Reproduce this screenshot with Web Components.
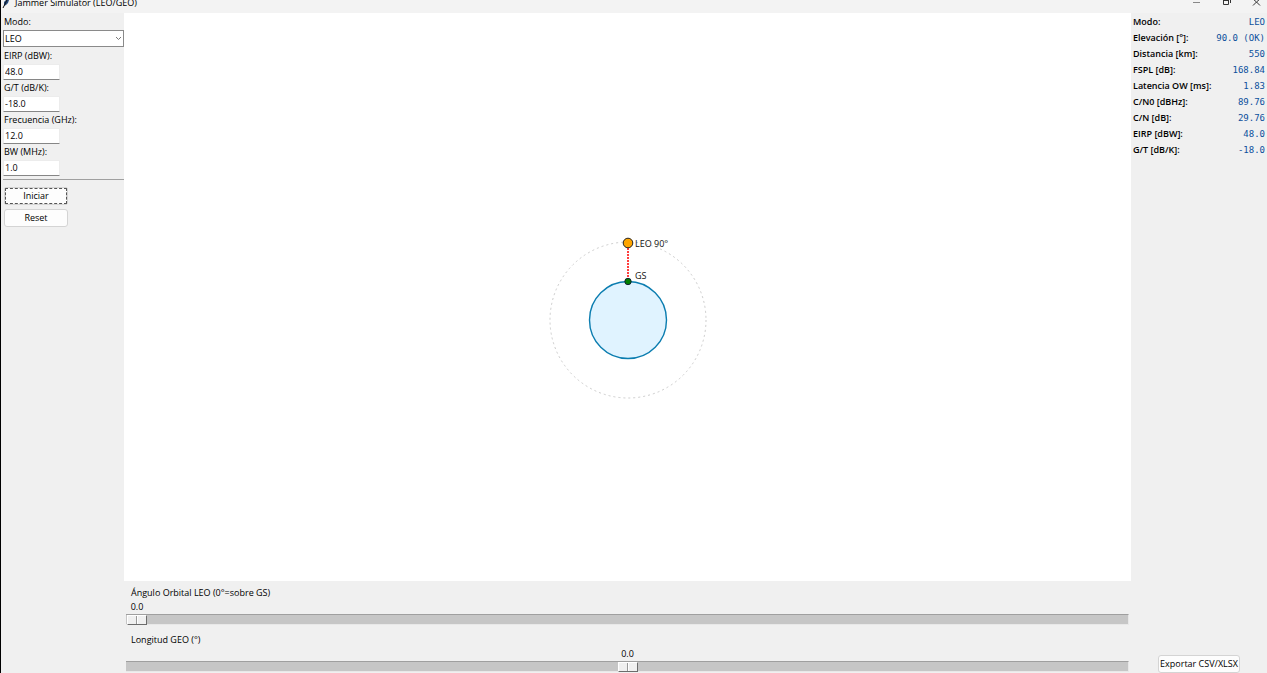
<!DOCTYPE html>
<html lang="es">
<head>
<meta charset="utf-8">
<title>Jammer Simulator (LEO/GEO)</title>
<style>
  body { margin: 0; background: #f0f0f0; color: #000; font: 9px/16px "Open Sans", "Noto Sans", sans-serif; }
</style>
</head>
<body>
<jammer-app></jammer-app>
<script>
const define = (name, html, setup) => {
  const template = document.createElement('template');
  template.innerHTML = html;
  customElements.define(name, class extends HTMLElement {
    constructor() {
      super();
      this.attachShadow({ mode: 'open' }).append(template.content.cloneNode(true));
    }
    connectedCallback() { if (setup) setup(this, this.shadowRoot); }
  });
};

define('title-bar', `
<style>
  :host { display: flex; align-items: flex-start; height: 13px; overflow: hidden; background: #f3f3f3; line-height: 6px; }
  .feather { width: 8px; height: 8px; margin: 0 4px 0 1px; }
  span { flex: 1; white-space: nowrap; padding-left: 1px; }
  button { border: 0; padding: 0; width: 30px; height: 8px; background: none; display: flex; justify-content: flex-end; }
  button:last-child { padding-right: 6px; width: 36px; }
  button svg { width: 9px; height: 8px; fill: none; stroke: #333; }
</style>
<svg class="feather" viewBox="0 0 8 8"><path d="M2 6 2 2 4 0H7L6 3 4 5Z" fill="#254a7c"/><path d="M1 8 3 4 5 0" fill="none" stroke="#111"/></svg>
<span><slot></slot></span>
<button aria-label="Minimizar"><svg viewBox="0 0 9 8"><path d="M1 2.500H8" stroke="#888"/></svg></button>
<button aria-label="Restaurar"><svg viewBox="0 0 9 8"><path d="M1.500 0V4.500H6.500V0M1 0.500H7M8.500 0V3"/></svg></button>
<button aria-label="Cerrar"><svg viewBox="0 0 9 8"><path d="M1 -1 4.500 2 8 -1M1 5.500 4.500 2 8 5.500"/></svg></button>
`);

define('mode-select', `
<style>
  :host { display: block; }
  label { display: block; padding-left: 1px; }
  div { display: grid; align-items: center; padding-bottom: 1px; }
  select, svg { grid-area: 1 / 1; }
  select { appearance: none; box-sizing: border-box; width: 100%; height: 17px; border: 1px solid #8a8a8a; border-radius: 0; background: #fff; color: inherit; font: inherit; line-height: 15px; padding: 0 12px 0 1px; margin: 0; }
  svg { justify-self: end; width: 7px; height: 5px; margin-right: 2px; fill: none; stroke: #777; pointer-events: none; }
</style>
<label for="mode">Modo:</label>
<div><select id="mode"><option>LEO</option><option>GEO</option></select>
<svg viewBox="0 0 7 5"><path d="M1 1 3.500 3.500 6 1"/></svg></div>
`);

define('number-field', `
<style>
  :host { display: block; }
  label { display: block; padding-left: 1px; white-space: nowrap; }
  input { display: block; box-sizing: border-box; width: 57px; height: 16px; border: 1px solid #ececec; border-bottom-color: #868686; border-radius: 1px; background: #fff; color: inherit; font: inherit; padding: 0 1px; }
</style>
<label for="field"><slot></slot></label>
<input id="field" type="text" inputmode="decimal">
`, (host, root) => { root.querySelector('input').value = host.getAttribute('value'); });

define('push-button', `
<style>
  :host { display: block; }
  button { display: block; box-sizing: border-box; width: 100%; height: 18px; border: 1px solid #d4d4d4; border-radius: 3px; background: #fdfdfd; color: inherit; font: inherit; line-height: 16px; padding: 0 1px; white-space: nowrap; }
  :host([selected]) button { outline: 1px dashed #555; outline-offset: -2px; border-radius: 2px; }
</style>
<button type="button"><slot></slot></button>
`);

define('control-panel', `
<style>
  :host { display: block; padding: 1px 0 0 2px; }
  hr { border: 0; border-top: 1px solid #a0a0a0; margin: 3px 0 7px; }
  .buttons { display: grid; gap: 4px; width: 64px; padding-left: 1px; }
</style>
<mode-select></mode-select>
<number-field value="48.0">EIRP (dBW):</number-field>
<number-field value="-18.0">G/T (dB/K):</number-field>
<number-field value="12.0">Frecuencia (GHz):</number-field>
<number-field value="1.0">BW (MHz):</number-field>
<hr>
<div class="buttons"><push-button selected>Iniciar</push-button><push-button>Reset</push-button></div>
`);

define('orbit-view', `
<style>
  :host { display: flex; align-items: center; justify-content: center; box-sizing: border-box; padding-top: 46px; background: #fff; min-height: 0; }
  svg { width: 180px; height: 180px; flex: none; }
  text { font: inherit; fill: #111; }
</style>
<svg viewBox="-90 -90 180 180" role="img" aria-label="Órbita">
  <circle r="78" fill="none" stroke="#ccc" stroke-dasharray="2 3"/>
  <circle r="38.500" fill="#e0f3ff" stroke="#0b7db0" stroke-width="1.400"/>
  <path d="M0-72V-39" stroke="#f00" stroke-width="1.500" stroke-dasharray="2 1"/>
  <circle cy="-38.500" r="3.200" fill="#008000" stroke="#123" />
  <circle cy="-77" r="4.800" fill="#ffa500" stroke="#222"/>
  <text x="7" y="-73">LEO 90°</text>
  <text x="7" y="-41">GS</text>
</svg>
`);

define('value-scale', `
<style>
  :host { display: block; line-height: 14px; }
  label { display: block; padding-left: 5px; }
  .readout { display: grid; grid-template-columns: var(--before) 20px var(--after); padding: 0 1px; }
  output { grid-column: 2; text-align: center; white-space: nowrap; }
  input { appearance: none; display: block; box-sizing: border-box; width: 100%; height: 11px; margin: 0; padding: 0 0 0 1px; background: #c6c6c6; border: solid; border-width: 1px 1px 1px 0; border-color: #9f9f9f #e8e8e8 #e8e8e8; }
  input::-webkit-slider-thumb { appearance: none; box-sizing: border-box; width: 20px; height: 10px; border: 1px solid; border-color: #fff #6c6c6c #6c6c6c #fff; background: linear-gradient(90deg, transparent 8px, #999 8px 9px, #fff 9px 10px, transparent 10px) #f0f0f0; }
</style>
<label for="scale"><slot></slot></label>
<div class="readout"><output for="scale">0.0</output></div>
<input id="scale" type="range">
`, (host, root) => {
  const input = root.querySelector('input');
  input.min = host.getAttribute('min');
  input.max = host.getAttribute('max');
  input.value = 0;
  const update = () => {
    host.style.setProperty('--before', (input.value - input.min) + 'fr');
    host.style.setProperty('--after', (input.max - input.value) + 'fr');
    root.querySelector('output').textContent = Number(input.value).toFixed(1);
  };
  input.addEventListener('input', update);
  update();
});

define('metric-table', `
<style>
  :host { display: block; }
  table { width: 100%; border-collapse: collapse; }
  th, td { padding: 0; height: 16px; white-space: nowrap; }
  th { text-align: left; font-weight: 600; color: #000; }
  td { text-align: right; color: #0b4f9c; font-family: "DejaVu Sans Mono", monospace; }
</style>
<table><tbody></tbody></table>
`, (host, root) => {
  const body = root.querySelector('tbody');
  body.replaceChildren();
  for (const [name, value] of [
    ['Modo:', 'LEO'], ['Elevación [°]:', '90.0 (OK)'], ['Distancia [km]:', '550'],
    ['FSPL [dB]:', '168.84'], ['Latencia OW [ms]:', '1.83'], ['C/N0 [dBHz]:', '89.76'],
    ['C/N [dB]:', '29.76'], ['EIRP [dBW]:', '48.0'], ['G/T [dB/K]:', '-18.0']]) {
    const row = body.insertRow();
    const head = document.createElement('th');
    head.scope = 'row';
    head.textContent = name;
    row.append(head);
    row.insertCell().textContent = value;
  }
});

define('jammer-app', `
<style>
  :host { display: grid; grid-template-rows: auto 1fr; box-sizing: border-box; height: 100vh; border-left: 1px solid #000; }
  main { display: grid; grid-template-columns: 123px 1fr 136px; min-height: 0; }
  .center { display: flex; flex-direction: column; min-width: 0; }
  orbit-view { flex: 1; }
  .scales { display: grid; gap: 8px; padding: 5px 2px 1px; }
  aside { display: flex; flex-direction: column; justify-content: space-between; padding: 1px 2px 0; }
  aside push-button { align-self: center; width: 82px; }
</style>
<title-bar>Jammer Simulator (LEO/GEO)</title-bar>
<main>
  <control-panel></control-panel>
  <div class="center">
    <orbit-view></orbit-view>
    <div class="scales">
      <value-scale min="0" max="360">Ángulo Orbital LEO (0°=sobre GS)</value-scale>
      <value-scale min="-180" max="180">Longitud GEO (°)</value-scale>
    </div>
  </div>
  <aside><metric-table></metric-table><push-button>Exportar CSV/XLSX</push-button></aside>
</main>
`);
</script>
</body>
</html>
